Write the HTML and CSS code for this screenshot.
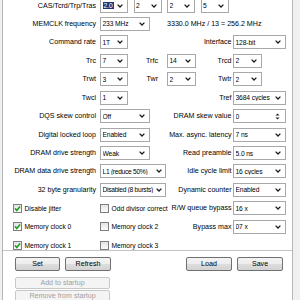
FILE: index.html
```html
<!DOCTYPE html>
<html>
<head>
<meta charset="utf-8">
<link rel="stylesheet" href="styles.css">
</head>
<body>
<div class="page">
  <div class="panel">
    <div class="grid">
      <!-- row 1 -->
      <div class="lbl">CAS/Tcrd/Trp/Tras</div>
      <div class="quad">
        <div class="sel"><span class="v"><span class="hl">2.0</span></span><svg class="chev" viewBox="0 0 6 4" width="6" height="4"><path d="M0.6 0.6 L3 3 L5.4 0.6"/></svg></div>
        <div class="sel"><span class="v">2</span><svg class="chev" viewBox="0 0 6 4" width="6" height="4"><path d="M0.6 0.6 L3 3 L5.4 0.6"/></svg></div>
        <div class="sel"><span class="v">2</span><svg class="chev" viewBox="0 0 6 4" width="6" height="4"><path d="M0.6 0.6 L3 3 L5.4 0.6"/></svg></div>
        <div class="sel"><span class="v">5</span><svg class="chev" viewBox="0 0 6 4" width="6" height="4"><path d="M0.6 0.6 L3 3 L5.4 0.6"/></svg></div>
      </div>
      <!-- row 2 -->
      <div class="lbl">MEMCLK frequency</div>
      <div class="wide-cell"><div class="sel w50"><span class="v">233 MHz</span><svg class="chev" viewBox="0 0 6 4" width="6" height="4"><path d="M0.6 0.6 L3 3 L5.4 0.6"/></svg></div></div>
      <div class="info">3330.0 MHz / 13 = 256.2 MHz</div>
      <!-- row 3 -->
      <div class="lbl">Command rate</div>
      <div class="sel c2"><span class="v">1T</span><svg class="chev" viewBox="0 0 6 4" width="6" height="4"><path d="M0.6 0.6 L3 3 L5.4 0.6"/></svg></div>
      <div class="rl">Interface</div>
      <div class="sel c6"><span class="v">128-bit</span><svg class="chev" viewBox="0 0 6 4" width="6" height="4"><path d="M0.6 0.6 L3 3 L5.4 0.6"/></svg></div>
      <!-- row 4 -->
      <div class="lbl">Trc</div>
      <div class="sel c2"><span class="v">7</span><svg class="chev" viewBox="0 0 6 4" width="6" height="4"><path d="M0.6 0.6 L3 3 L5.4 0.6"/></svg></div>
      <div class="mid">Trfc</div>
      <div class="sel c4"><span class="v">14</span><svg class="chev" viewBox="0 0 6 4" width="6" height="4"><path d="M0.6 0.6 L3 3 L5.4 0.6"/></svg></div>
      <div class="sl">Trcd</div>
      <div class="sel c6 narrow"><span class="v">2</span><svg class="chev" viewBox="0 0 6 4" width="6" height="4"><path d="M0.6 0.6 L3 3 L5.4 0.6"/></svg></div>
      <!-- row 5 -->
      <div class="lbl">Trwt</div>
      <div class="sel c2"><span class="v">3</span><svg class="chev" viewBox="0 0 6 4" width="6" height="4"><path d="M0.6 0.6 L3 3 L5.4 0.6"/></svg></div>
      <div class="mid">Twr</div>
      <div class="sel c4"><span class="v">2</span><svg class="chev" viewBox="0 0 6 4" width="6" height="4"><path d="M0.6 0.6 L3 3 L5.4 0.6"/></svg></div>
      <div class="sl">Twtr</div>
      <div class="sel c6 narrow"><span class="v">2</span><svg class="chev" viewBox="0 0 6 4" width="6" height="4"><path d="M0.6 0.6 L3 3 L5.4 0.6"/></svg></div>
      <!-- row 6 -->
      <div class="lbl">Twcl</div>
      <div class="sel c2"><span class="v">1</span><svg class="chev" viewBox="0 0 6 4" width="6" height="4"><path d="M0.6 0.6 L3 3 L5.4 0.6"/></svg></div>
      <div class="rl">Tref</div>
      <div class="sel c6"><span class="v">3684 cycles</span><svg class="chev" viewBox="0 0 6 4" width="6" height="4"><path d="M0.6 0.6 L3 3 L5.4 0.6"/></svg></div>
      <!-- row 7 -->
      <div class="lbl">DQS skew control</div>
      <div class="wide-cell"><div class="sel w50"><span class="v">Off</span><svg class="chev" viewBox="0 0 6 4" width="6" height="4"><path d="M0.6 0.6 L3 3 L5.4 0.6"/></svg></div></div>
      <div class="rl">DRAM skew value</div>
      <div class="sel c6 spin"><span class="v">0</span><svg class="arrows" viewBox="0 0 5 7" width="5" height="7"><path d="M2.5 0.5 L4.5 2.5 L0.5 2.5 Z M0.5 4.5 L4.5 4.5 L2.5 6.5 Z"/></svg></div>
      <!-- row 8 -->
      <div class="lbl">Digital locked loop</div>
      <div class="wide-cell"><div class="sel w50"><span class="v">Enabled</span><svg class="chev" viewBox="0 0 6 4" width="6" height="4"><path d="M0.6 0.6 L3 3 L5.4 0.6"/></svg></div></div>
      <div class="rl">Max. async. latency</div>
      <div class="sel c6"><span class="v">7 ns</span><svg class="chev" viewBox="0 0 6 4" width="6" height="4"><path d="M0.6 0.6 L3 3 L5.4 0.6"/></svg></div>
      <!-- row 9 -->
      <div class="lbl">DRAM drive strength</div>
      <div class="wide-cell"><div class="sel w50"><span class="v">Weak</span><svg class="chev" viewBox="0 0 6 4" width="6" height="4"><path d="M0.6 0.6 L3 3 L5.4 0.6"/></svg></div></div>
      <div class="rl">Read preamble</div>
      <div class="sel c6"><span class="v">5.0 ns</span><svg class="chev" viewBox="0 0 6 4" width="6" height="4"><path d="M0.6 0.6 L3 3 L5.4 0.6"/></svg></div>
      <!-- row 10 -->
      <div class="lbl">DRAM data drive strength</div>
      <div class="wide-cell"><div class="sel w65"><span class="v">L1 (reduce 50%)</span><svg class="chev" viewBox="0 0 6 4" width="6" height="4"><path d="M0.6 0.6 L3 3 L5.4 0.6"/></svg></div></div>
      <div class="rl">Idle cycle limit</div>
      <div class="sel c6"><span class="v">16 cycles</span><svg class="chev" viewBox="0 0 6 4" width="6" height="4"><path d="M0.6 0.6 L3 3 L5.4 0.6"/></svg></div>
      <!-- row 11 -->
      <div class="lbl">32 byte granularity</div>
      <div class="wide-cell"><div class="sel w65"><span class="v">Disabled (8 bursts)</span><svg class="chev" viewBox="0 0 6 4" width="6" height="4"><path d="M0.6 0.6 L3 3 L5.4 0.6"/></svg></div></div>
      <div class="rl">Dynamic counter</div>
      <div class="sel c6"><span class="v">Enabled</span><svg class="chev" viewBox="0 0 6 4" width="6" height="4"><path d="M0.6 0.6 L3 3 L5.4 0.6"/></svg></div>
      <!-- row 12 -->
      <label class="chk c1"><span class="box on"><svg viewBox="0 0 7 7" width="7" height="7"><path d="M1 3.4 L2.8 5.4 L6 1.4"/></svg></span>Disable jitter</label>
      <label class="chk c23"><span class="box"></span>Odd divisor correct</label>
      <div class="rl">R/W queue bypass</div>
      <div class="sel c6"><span class="v">16 x</span><svg class="chev" viewBox="0 0 6 4" width="6" height="4"><path d="M0.6 0.6 L3 3 L5.4 0.6"/></svg></div>
      <!-- row 13 -->
      <label class="chk c1"><span class="box on"><svg viewBox="0 0 7 7" width="7" height="7"><path d="M1 3.4 L2.8 5.4 L6 1.4"/></svg></span>Memory clock 0</label>
      <label class="chk c23"><span class="box"></span>Memory clock 2</label>
      <div class="rl">Bypass max</div>
      <div class="sel c6"><span class="v">07 x</span><svg class="chev" viewBox="0 0 6 4" width="6" height="4"><path d="M0.6 0.6 L3 3 L5.4 0.6"/></svg></div>
      <!-- row 14 -->
      <label class="chk c1"><span class="box on"><svg viewBox="0 0 7 7" width="7" height="7"><path d="M1 3.4 L2.8 5.4 L6 1.4"/></svg></span>Memory clock 1</label>
      <label class="chk c23"><span class="box"></span>Memory clock 3</label>
    </div>
  </div>
  <div class="actions">
    <div class="btnrow">
      <button class="btn">Set</button>
      <button class="btn">Refresh</button>
      <button class="btn push">Load</button>
      <button class="btn">Save</button>
    </div>
    <button class="btn off" disabled>Add to startup</button>
    <button class="btn off second" disabled>Remove from startup</button>
  </div>
</div>
</body>
</html>
```
FILE: styles.css
```css
* { box-sizing: border-box; }
html, body { margin: 0; padding: 0; }
body {
  width: 300px;
  height: 300px;
  overflow: hidden;
  background: #f0f0f0;
  font-family: "Liberation Sans", Arial, sans-serif;
  font-size: 7.1px;
  color: #000;
}
.page {
  margin-left: 2px;
  width: 291px;
  height: 300px;
  background: #fff;
  border-left: 1px solid #b5b5b5;
  border-right: 1px solid #b5b5b5;
}
.panel {
  height: 251px;
  border-bottom: 1px solid #c4c4c4;
  overflow: hidden;
}
.grid {
  display: grid;
  grid-template-columns: 97px 28px 39px 29px 37px 53px;
  grid-auto-rows: 14px;
  row-gap: 4.45px;
  margin-top: -1.5px;
  align-items: center;
}
.grid > * { min-width: 0; }
.lbl {
  grid-column: 1;
  text-align: right;
  padding-right: 4px;
  white-space: nowrap;
}
.mid {
  grid-column: 3;
  text-align: right;
  padding-right: 9px;
  white-space: nowrap;
}
.sl {
  grid-column: 5;
  text-align: right;
  padding-right: 1.5px;
  white-space: nowrap;
}
.rl {
  grid-column: 4 / 6;
  text-align: right;
  padding-right: 1.5px;
  white-space: nowrap;
}
.info {
  grid-column: 4 / 7;
  white-space: nowrap;
}
.quad {
  grid-column: 2 / 6;
  display: flex;
  gap: 5.5px;
}
.quad .sel { width: 28px; }
.wide-cell { grid-column: 2 / 4; }
.c2 { grid-column: 2; }
.c4 { grid-column: 4; }
.c6 { grid-column: 6; }
.sel {
  height: 14px;
  border: 1px solid #a8a8a8;
  background: #fff;
  display: flex;
  align-items: center;
  padding: 0 4px 0 1.5px;
  gap: 1px;
  font-size: 6.7px;
  letter-spacing: -0.1px;
}
.sel.narrow { width: 29px; }
.sel.w50 { width: 50px; }
.sel.w65 { width: 66px; letter-spacing: -0.3px; padding-right: 3px; }
.sel .v {
  flex: 1;
  white-space: nowrap;
  overflow: hidden;
}
.hl {
  background: #1c3a7a;
  color: #fff;
  padding: 1px 1px;
}
.chev { flex: none; }
.chev path {
  fill: none;
  stroke: #1a1a1a;
  stroke-width: 1.3;
}
.arrows { flex: none; margin-right: 1px; }
.arrows path { fill: #222; }
.chk {
  display: flex;
  align-items: center;
  gap: 2.5px;
  white-space: nowrap;
  font-size: 6.7px;
}
.c1 { grid-column: 1; padding-left: 10px; }
.c23 { grid-column: 2 / 4; }
.box {
  flex: none;
  width: 9px;
  height: 9px;
  border: 1px solid #7e7e7e;
  background: linear-gradient(#e4e4e4, #fbfbfb);
  display: flex;
  align-items: center;
  justify-content: center;
}
.box path {
  fill: none;
  stroke: #21a121;
  stroke-width: 1.6;
}
.actions {
  padding: 6px 9px 0 12px;
}
.btnrow {
  display: flex;
  gap: 5px;
}
.btn {
  font: inherit;
  line-height: 12px;
  color: #000;
  height: 14px;
  width: 46px;
  padding: 0;
  border: 1px solid #707070;
  border-radius: 2px;
  background: linear-gradient(#f4f4f4 0%, #ececec 50%, #dedede 50%, #d2d2d2 100%);
}
.btnrow .btn:first-child { width: 45px; }
.push { margin-left: auto; }
.btn.off {
  display: block;
  width: 95px;
  height: 12px;
  line-height: 10px;
  margin-top: 6px;
  border-color: #c8c8c8;
  background: #f4f4f4;
  color: #a0a0a0;
}
.btn.second { margin-top: 1px; }
```
